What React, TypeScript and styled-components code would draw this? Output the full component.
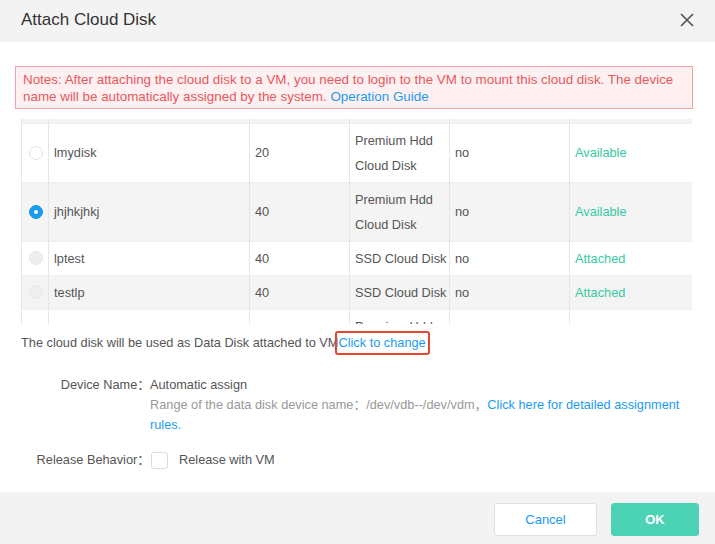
import { useLayoutEffect, useRef } from 'react';
import styled, { createGlobalStyle } from 'styled-components';

type DiskStatus = 'Available' | 'Attached';

interface Disk {
  name: string;
  size: number;
  type: string;
  shared: string;
  status: DiskStatus;
}

const disks: Disk[] = [
  { name: 'lmydisk', size: 20, type: 'Premium Hdd Cloud Disk', shared: 'no', status: 'Available' },
  { name: 'jhjhkjhkj', size: 40, type: 'Premium Hdd Cloud Disk', shared: 'no', status: 'Available' },
  { name: 'lptest', size: 40, type: 'SSD Cloud Disk', shared: 'no', status: 'Attached' },
  { name: 'testlp', size: 40, type: 'SSD Cloud Disk', shared: 'no', status: 'Attached' },
  { name: 'lp0912', size: 40, type: 'Premium Hdd Cloud Disk', shared: 'no', status: 'Available' },
];

const FONT = `'Liberation Sans', Arial, 'Noto Sans CJK SC', sans-serif`;

const GlobalStyle = createGlobalStyle`
  html, body {
    margin: 0;
    padding: 0;
    background: #fff;
  }
  body {
    font-family: ${FONT};
    font-size: 12.75px;
    color: #555;
  }
`;

const App = () => {
  const scrollRef = useRef<HTMLDivElement>(null);

  useLayoutEffect(() => {
    // the list is scrolled so only a sliver of the header is visible
    if (scrollRef.current) scrollRef.current.scrollTop = 30;
  }, []);

  return (
    <Dialog>
      <GlobalStyle />
      <Header>
        <Title>Attach Cloud Disk</Title>
        <CloseButton aria-label="close">
          <svg width="14" height="14" viewBox="0 0 14 14">
            <path d="M1 1 L13 13 M13 1 L1 13" stroke="#555" strokeWidth="1.7" fill="none" />
          </svg>
        </CloseButton>
      </Header>

      <Body>
        <Notice>
          Notes: After attaching the cloud disk to a VM, you need to login to the VM to mount this cloud disk. The device
          <br />
          name will be automatically assigned by the system. <Link>Operation Guide</Link>
        </Notice>

        <TableScroll ref={scrollRef}>
          <Table>
            <colgroup>
              <col style={{ width: 27 }} />
              <col style={{ width: 201 }} />
              <col style={{ width: 100 }} />
              <col style={{ width: 100 }} />
              <col style={{ width: 120 }} />
              <col style={{ width: 123 }} />
            </colgroup>
            <thead>
              <HeadRow>
                <th />
                <th>Name</th>
                <th>Size(GB)</th>
                <th>Type</th>
                <th>Shared</th>
                <th>Status</th>
              </HeadRow>
            </thead>
            <tbody>
              {disks.map((d, i) => (
                <Row key={d.name} $striped={i % 2 === 1}>
                  <RadioCell>
                    <Radio $state={i === 1 ? 'checked' : d.status === 'Attached' ? 'disabled' : 'idle'} />
                  </RadioCell>
                  <Cell>{d.name}</Cell>
                  <Cell>{d.size}</Cell>
                  <Cell>{d.type}</Cell>
                  <Cell>{d.shared}</Cell>
                  <StatusCell>{d.status}</StatusCell>
                </Row>
              ))}
            </tbody>
          </Table>
        </TableScroll>

        <AttachLine>
          The cloud disk will be used as Data Disk attached to VM<Marked>Click to change</Marked>
        </AttachLine>

        <Form>
          <FieldRow>
            <FieldLabel>Device Name：</FieldLabel>
            <FieldValue>
              Automatic assign
              <Hint>
                Range of the data disk device name：/dev/vdb--/dev/vdm，<Link>Click here for detailed assignment rules.</Link>
              </Hint>
            </FieldValue>
          </FieldRow>
          <FieldRow $center>
            <FieldLabel>Release Behavior：</FieldLabel>
            <CheckLabel>
              <CheckBox />
              Release with VM
            </CheckLabel>
          </FieldRow>
        </Form>
      </Body>

      <Footer>
        <Button>Cancel</Button>
        <Button $primary>OK</Button>
      </Footer>
    </Dialog>
  );
};

const Dialog = styled.div`
  width: 715px;
  height: 544px;
  display: flex;
  flex-direction: column;
  background: #fff;
  overflow: hidden;
`;

const Header = styled.div`
  height: 42px;
  flex-shrink: 0;
  background: #f3f3f3;
  display: flex;
  align-items: center;
  justify-content: space-between;
  padding: 0 21px 3px 21px;
  box-sizing: border-box;
`;

const Title = styled.div`
  font-size: 17px;
  color: #333;
`;

const CloseButton = styled.div`
  width: 14px;
  height: 14px;
  display: flex;
`;

const Body = styled.div`
  flex: 1;
  padding: 24px 23px 0 21px;
  display: flex;
  flex-direction: column;
`;

const Notice = styled.div`
  margin: 0 -1px 0 -6px;
  padding: 4px 2px 3px 7px;
  border: 1px solid #f2a2a7;
  background: #fff1f2;
  color: #e8585d;
  font-size: 13.4px;
  line-height: 17px;
  white-space: nowrap;
`;

const Link = styled.span`
  color: #1a9bf0;
  cursor: pointer;
`;

const TableScroll = styled.div`
  margin-top: 10px;
  height: 205px;
  overflow: hidden;
`;

const Table = styled.table`
  width: 671px;
  table-layout: fixed;
  border-collapse: collapse;
  border-left: 1px solid #e6e6e6;
  border-right: 1px solid #e6e6e6;

  th,
  td {
    border-left: 1px solid #e6e6e6;
  }
`;

const HeadRow = styled.tr`
  height: 34px;
  background: #f4f4f4;

  th {
    text-align: left;
    font-weight: normal;
    padding: 0 5px;
  }
`;

const Row = styled.tr<{ $striped: boolean }>`
  background: ${(p) => (p.$striped ? '#f4f4f4' : '#fff')};
  border-top: 1px solid #efefef;
`;

const Cell = styled.td`
  padding: 4px 2px 4px 5px;
  line-height: 25px;
  vertical-align: middle;
  color: #555;
`;

const RadioCell = styled(Cell)`
  padding: 0 0 0 7px;
`;

const StatusCell = styled(Cell)`
  color: #35cba2;
`;

const Radio = styled.span<{ $state: 'checked' | 'disabled' | 'idle' }>`
  display: block;
  width: 14px;
  height: 14px;
  border-radius: 50%;
  box-sizing: border-box;
  background: ${(p) => (p.$state === 'checked' ? '#1a9bf0' : p.$state === 'disabled' ? '#eeeeee' : '#fff')};
  border: 1px solid
    ${(p) => (p.$state === 'checked' ? '#1a9bf0' : p.$state === 'disabled' ? '#e8e8e8' : '#dfe4ea')};
  position: relative;

  &::after {
    content: '';
    display: ${(p) => (p.$state === 'checked' ? 'block' : 'none')};
    position: absolute;
    left: 4px;
    top: 4px;
    width: 4px;
    height: 4px;
    border-radius: 50%;
    background: #fff;
  }
`;

const AttachLine = styled.div`
  margin-top: 7px;
  line-height: 24px;
  color: #555;
`;

const Marked = styled.span`
  display: inline-block;
  margin-left: -4px;
  padding: 0 2px;
  line-height: 20px;
  border: 2px solid #e8452e;
  border-radius: 3px;
  color: #1a9bf0;
`;

const Form = styled.div`
  margin-top: 20px;
  display: flex;
  flex-direction: column;
  gap: 16px;
`;

const FieldRow = styled.div<{ $center?: boolean }>`
  display: flex;
  align-items: ${(p) => (p.$center ? 'center' : 'flex-start')};
`;

const FieldLabel = styled.div`
  width: 129px;
  flex-shrink: 0;
  text-align: right;
  line-height: 20px;
  color: #555;
`;

const FieldValue = styled.div`
  line-height: 20px;
  color: #555;
`;

const Hint = styled.div`
  color: #999;
  line-height: 19.5px;
`;

const CheckLabel = styled.label`
  display: flex;
  align-items: center;
  gap: 11px;
  line-height: 20px;
  color: #555;
`;

const CheckBox = styled.span`
  width: 17px;
  height: 17px;
  margin-left: 1px;
  box-sizing: border-box;
  border: 1px solid #dcdcdc;
  border-radius: 3px;
  background: #fff;
`;

const Footer = styled.div`
  height: 52px;
  flex-shrink: 0;
  background: #f3f3f3;
  display: flex;
  justify-content: flex-end;
  align-items: flex-start;
  gap: 14px;
  padding: 11px 16px 0 0;
  box-sizing: border-box;
`;

const Button = styled.button<{ $primary?: boolean }>`
  height: 33px;
  width: ${(p) => (p.$primary ? '88px' : '103px')};
  border-radius: 3px;
  border: 1px solid ${(p) => (p.$primary ? '#4cd3b6' : '#dde1e6')};
  background: ${(p) => (p.$primary ? '#4cd3b6' : '#fff')};
  color: ${(p) => (p.$primary ? '#fff' : '#1a9bf0')};
  font-family: ${FONT};
  font-size: 13px;
  font-weight: ${(p) => (p.$primary ? 'bold' : 'normal')};
  cursor: pointer;
`;

export default App;
